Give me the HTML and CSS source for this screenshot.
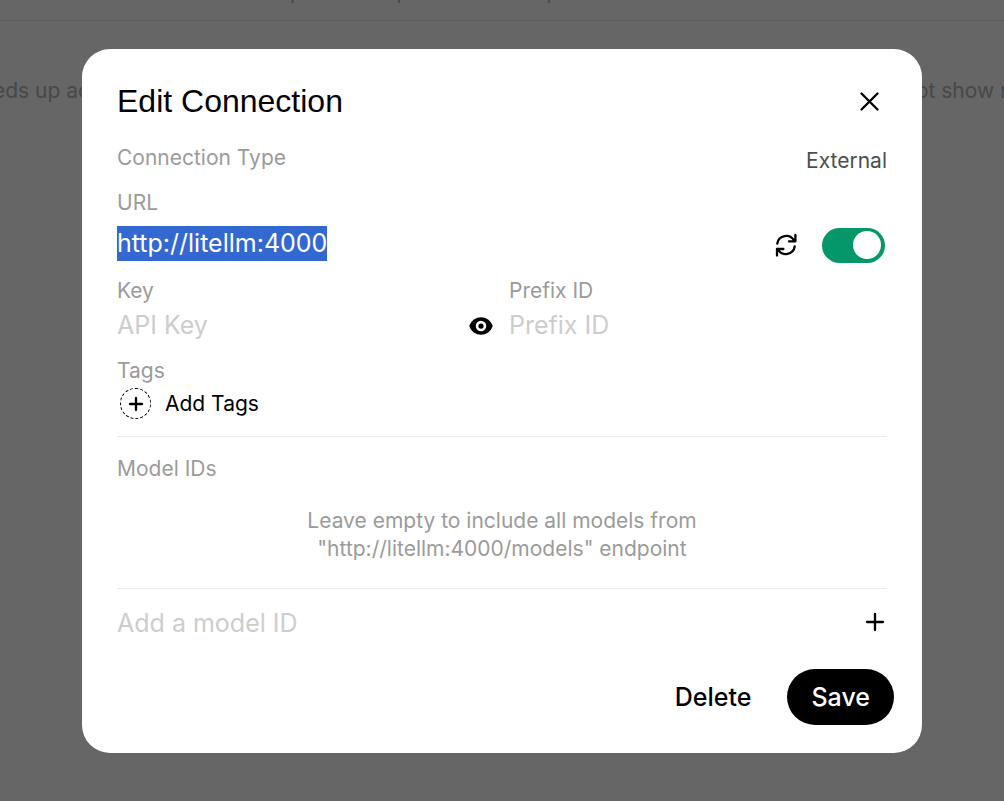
FILE: index.html
```html
<!DOCTYPE html>
<html lang="en">
<head>
<meta charset="utf-8">
<title>Edit Connection</title>
<link rel="stylesheet" href="styles.css">
</head>
<body>
<main class="page">
  <p class="page-note page-note-top">OpenAI compatible API endpoints.</p>
  <p class="page-note page-note-cache"><span>eds up ac</span><span>ot show r</span></p>
</main>
<div class="overlay">
  <form class="modal" role="dialog" aria-labelledby="title">
    <header class="header">
      <h1 class="title" id="title">Edit Connection</h1>
      <button class="icon-button close" type="button" aria-label="Close">
        <svg width="28" height="28" viewBox="0 0 28 28"><path d="M6.5 6.5L22.5 22.5M22.5 6.5L6.5 22.5"/></svg>
      </button>
    </header>

    <div class="type-row">
      <span class="label">Connection Type</span>
      <button class="type-button" type="button">External</button>
    </div>

    <div class="url-block">
      <label class="label" for="url">URL</label>
      <div class="url-row">
        <input class="field" id="url" type="text" value="http://litellm:4000" autocomplete="off" spellcheck="false">
        <button class="icon-button" type="button" aria-label="Verify connection">
          <svg width="28" height="28" viewBox="0 0 28 28"><path d="M5.3 12.5A9 9 0 0 1 22 9.5M23.4 4V10.4H17M22.7 15.5A9 9 0 0 1 6 18.5M5 24.5V18H11.4"/></svg>
        </button>
        <input class="toggle" type="checkbox" checked aria-label="Enabled">
      </div>
    </div>

    <div class="pair">
      <div class="column">
        <label class="label" for="key">Key</label>
        <div class="key-row">
          <input class="field" id="key" type="password" placeholder="API Key" autocomplete="off">
          <button class="icon-button" type="button" aria-label="Show key">
            <svg class="solid" width="28" height="28" viewBox="0 0 16 16"><path d="M8 9.5A1.5 1.5 0 1 0 8 6.5a1.5 1.5 0 0 0 0 3Z"/><path fill-rule="evenodd" d="M1.38 8.28a.87.87 0 0 1 0-.566 7.003 7.003 0 0 1 13.238.006.87.87 0 0 1 0 .566A7.003 7.003 0 0 1 1.379 8.28ZM11 8a3 3 0 1 1-6 0 3 3 0 0 1 6 0Z"/></svg>
          </button>
        </div>
      </div>
      <div class="column">
        <label class="label" for="prefix">Prefix ID</label>
        <input class="field" id="prefix" type="text" placeholder="Prefix ID" autocomplete="off">
      </div>
    </div>

    <div class="tags">
      <span class="label">Tags</span>
      <button class="add-tags" type="button">
        <span class="add-circle"><svg width="20" height="20" viewBox="0 0 20 20"><path d="M10 4V16M4 10H16"/></svg></span>
        Add Tags
      </button>
    </div>

    <section class="models">
      <h2 class="label">Model IDs</h2>
      <p class="hint">Leave empty to include all models from "http://litellm:4000/models" endpoint</p>
    </section>

    <div class="add-model">
      <input class="field" type="text" placeholder="Add a model ID" aria-label="Add a model ID" autocomplete="off">
      <button class="icon-button" type="button" aria-label="Add model">
        <svg width="24" height="24" viewBox="0 0 24 24"><path d="M12 4V20M4 12H20"/></svg>
      </button>
    </div>

    <footer class="footer">
      <button class="button" type="button">Delete</button>
      <button class="button primary" type="submit">Save</button>
    </footer>
  </form>
</div>
<script src="main.js"></script>
</body>
</html>
```

FILE: styles.css
```css
* {
  box-sizing: border-box;
}

body {
  margin: 0;
  min-height: 100vh;
  overflow: hidden;
  background: #fff;
  color: #000;
  font: 400 21px/28px Inter, "Liberation Sans", sans-serif;
}

h1, h2, p {
  margin: 0;
}

button, input {
  margin: 0;
  padding: 0;
  border: 0;
  background: none;
  color: inherit;
  font: inherit;
}

button {
  cursor: pointer;
}

svg {
  display: block;
  fill: none;
  stroke: #000;
  stroke-width: 2.3;
  stroke-linecap: round;
  stroke-linejoin: round;
}

.solid {
  fill: #000;
  stroke: none;
}

.page {
  overflow: hidden;
}

.page-note {
  color: #b4b4b4;
  white-space: nowrap;
}

.page-note-top {
  height: 43px;
  margin: -22px 0 56px;
  padding-left: 274px;
  border-bottom: 1px solid #ececec;
}

.page-note-cache {
  display: flex;
  justify-content: space-between;
  margin: 0 -4px 0 -7px;
}

.overlay {
  position: fixed;
  inset: 0;
  display: flex;
  align-items: center;
  justify-content: center;
  background: rgba(0, 0, 0, 0.6);
}

.modal {
  display: flex;
  flex-direction: column;
  width: 100%;
  max-width: 840px;
  padding: 31px 35px 28px;
  border-radius: 28px;
  background: #fff;
}

.header {
  display: flex;
  align-items: center;
  justify-content: space-between;
}

.title {
  font-family: "Liberation Sans", Arial, sans-serif;
  font-size: 32px;
  font-weight: 400;
  line-height: 42px;
}

.close {
  margin-right: 4px;
}

.label {
  display: block;
  color: #9b9b9b;
  font-size: 21px;
  font-weight: 400;
  line-height: 28px;
}

.type-row {
  display: flex;
  justify-content: space-between;
  min-height: 31px;
  margin-top: 22px;
}

.type-button {
  align-self: flex-end;
  color: #4e4e4e;
}

.url-block {
  margin-top: 14px;
}

.url-row {
  display: flex;
  align-items: flex-end;
  margin-top: 9px;
}

.field {
  flex: 1;
  min-width: 0;
  width: 100%;
  height: 35px;
  outline: none;
  font-size: 25px;
  line-height: 35px;
}

.field::placeholder {
  color: #cdcdcd;
  opacity: 1;
}

.field::selection {
  background: rgba(51, 103, 209, 0.996);
  color: #fff;
}

.url-row .field {
  align-self: flex-start;
}

.url-row .icon-button {
  margin: 0 22px 4px 0;
}

.toggle {
  appearance: none;
  display: flex;
  align-items: center;
  justify-content: flex-end;
  width: 63px;
  height: 35px;
  margin: 2px 2px 0 0;
  padding-right: 4px;
  border-radius: 18px;
  background: #059669;
}

.toggle::before {
  content: "";
  width: 28px;
  height: 28px;
  border-radius: 50%;
  background: #fff;
}

.pair {
  display: grid;
  grid-template-columns: 1fr 1fr;
  gap: 14px;
  margin-top: 14px;
}

.column .field {
  margin-top: 3px;
}

.key-row {
  display: flex;
  align-items: flex-end;
}

.key-row .icon-button {
  margin-bottom: 3px;
}

.tags {
  margin-top: 14px;
  padding-bottom: 16px;
  border-bottom: 1px solid #ececec;
}

.add-tags {
  display: flex;
  align-items: center;
  gap: 14px;
  min-height: 32px;
  margin: 3px 0 0 3px;
}

.add-circle {
  display: grid;
  place-items: center;
  width: 31px;
  height: 31px;
  border: 1px dashed #000;
  border-radius: 50%;
}

.models {
  padding: 18px 0 25px;
  border-bottom: 1px solid #ececec;
}

.hint {
  max-width: 420px;
  margin: 24px auto 0;
  color: #9b9b9b;
  text-align: center;
}

.add-model {
  display: flex;
  align-items: center;
  margin-top: 17px;
}

.add-model .icon-button {
  padding-bottom: 3px;
}

.footer {
  display: flex;
  justify-content: flex-end;
  gap: 12px;
  margin: 28px -7px 0 0;
}

.button {
  padding: 10px 24px;
  border-radius: 28px;
  font-size: 25px;
  font-weight: 500;
  line-height: 36px;
}

.primary {
  background: #000;
  color: #fff;
}
```

FILE: main.js
```js
const url = document.getElementById("url");
url.focus();
url.select();
```
